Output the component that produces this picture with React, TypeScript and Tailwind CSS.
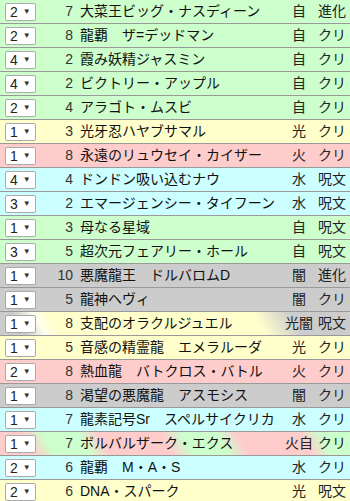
type Civ = "自" | "光" | "火" | "水" | "闇" | "光闇" | "火自";

type Card = {
  qty: number;
  cost: number;
  name: string;
  civ: Civ;
  kind: string;
};

const cards: Card[] = [
  { qty: 2, cost: 7, name: "大菜王ビッグ・ナスディーン", civ: "自", kind: "進化" },
  { qty: 2, cost: 8, name: "龍覇　ザ=デッドマン", civ: "自", kind: "クリ" },
  { qty: 4, cost: 2, name: "霞み妖精ジャスミン", civ: "自", kind: "クリ" },
  { qty: 4, cost: 2, name: "ビクトリー・アップル", civ: "自", kind: "クリ" },
  { qty: 2, cost: 4, name: "アラゴト・ムスビ", civ: "自", kind: "クリ" },
  { qty: 1, cost: 3, name: "光牙忍ハヤブサマル", civ: "光", kind: "クリ" },
  { qty: 1, cost: 8, name: "永遠のリュウセイ・カイザー", civ: "火", kind: "クリ" },
  { qty: 4, cost: 4, name: "ドンドン吸い込むナウ", civ: "水", kind: "呪文" },
  { qty: 3, cost: 2, name: "エマージェンシー・タイフーン", civ: "水", kind: "呪文" },
  { qty: 1, cost: 3, name: "母なる星域", civ: "自", kind: "呪文" },
  { qty: 3, cost: 5, name: "超次元フェアリー・ホール", civ: "自", kind: "呪文" },
  { qty: 1, cost: 10, name: "悪魔龍王　ドルバロムD", civ: "闇", kind: "進化" },
  { qty: 1, cost: 5, name: "龍神ヘヴィ", civ: "闇", kind: "クリ" },
  { qty: 1, cost: 8, name: "支配のオラクルジュエル", civ: "光闇", kind: "呪文" },
  { qty: 1, cost: 5, name: "音感の精霊龍　エメラルーダ", civ: "光", kind: "クリ" },
  { qty: 2, cost: 8, name: "熱血龍　バトクロス・バトル", civ: "火", kind: "クリ" },
  { qty: 1, cost: 8, name: "渇望の悪魔龍　アスモシス", civ: "闇", kind: "クリ" },
  { qty: 1, cost: 7, name: "龍素記号Sr　スペルサイクリカ", civ: "水", kind: "クリ" },
  { qty: 1, cost: 7, name: "ボルバルザーク・エクス", civ: "火自", kind: "クリ" },
  { qty: 2, cost: 6, name: "龍覇　M・A・S", civ: "水", kind: "クリ" },
  { qty: 2, cost: 6, name: "DNA・スパーク", civ: "光", kind: "呪文" },
];

// row background per civilization
const civBg: Record<Civ, string> = {
  自: "bg-[#ccffcc]",
  光: "bg-[#ffffcc]",
  火: "bg-[#ffcccc]",
  水: "bg-[#ccffff]",
  闇: "bg-[#cccccc]",
  光闇:
    "bg-[image:repeating-linear-gradient(60deg,#cccccc_0px,#cccccc_22px,#ffffee_40px,#ffffcc_52px,#ffffcc_230px,#cccccc_262px,#cccccc_290px)]",
  火自:
    "bg-[image:repeating-linear-gradient(60deg,#ffcccc_0px,#ffcccc_30px,#ccffcc_48px,#ccffcc_78px,#ffcccc_96px,#ffcccc_120px)]",
};

const QtySelect = ({ value }: { value: number }) => (
  <div className="flex items-center w-[31px] h-[18px] bg-white border border-[#a9a9a9] rounded-[2px] pl-[4px] gap-[5px]">
    <span className="text-[14px] leading-none text-[#222]">{value}</span>
    <span className="text-[8px] leading-none text-[#333]">▼</span>
  </div>
);

const CardRow = ({ card }: { card: Card }) => (
  <div
    className={`flex items-center h-[24px] border-b border-[#999] ${civBg[card.civ]}`}
  >
    <div className="pl-[5px] w-[40px] shrink-0">
      <QtySelect value={card.qty} />
    </div>
    <div className="w-[33px] shrink-0 text-right text-[14px] text-[#333]">
      {card.cost}
    </div>
    <div className="flex-1 pl-[7px] text-[14px] text-[#111] whitespace-nowrap overflow-hidden">
      {card.name}
    </div>
    <div className="w-[38px] shrink-0 text-center text-[14px] text-[#222] whitespace-nowrap">
      {card.civ}
    </div>
    <div className="w-[32px] shrink-0 text-[14px] text-[#222] whitespace-nowrap">
      {card.kind}
    </div>
  </div>
);

const App = () => {
  return (
    <div className="w-[350px] h-[501px] overflow-hidden bg-white font-['Liberation_Sans','Noto_Sans_CJK_JP',sans-serif]">
      {cards.map((c, i) => (
        <CardRow key={i} card={c} />
      ))}
    </div>
  );
};

export default App;
